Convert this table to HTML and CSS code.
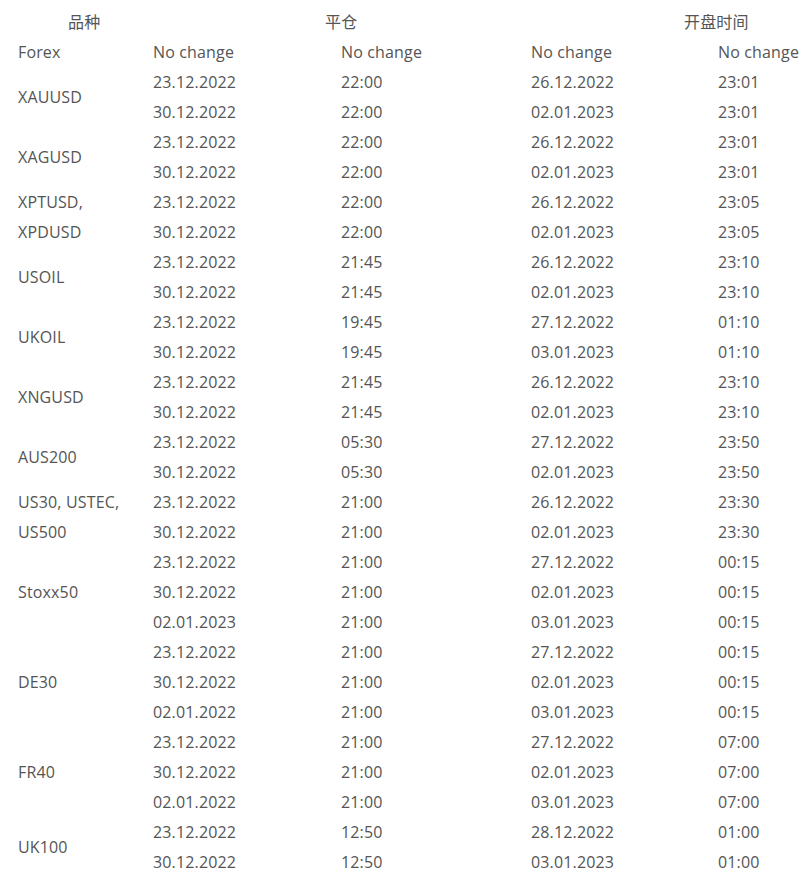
FILE: index.html
```html
<!DOCTYPE html>
<html lang="zh">
<head>
<meta charset="utf-8">
<title>Holiday schedule</title>
<link rel="stylesheet" href="styles.css">
</head>
<body>
<table class="sched">
  <colgroup>
    <col class="c1"><col class="c2"><col class="c3"><col class="c4"><col class="c5">
  </colgroup>
  <thead>
    <tr>
      <th class="h1">品种</th>
      <th class="h2" colspan="2">平仓</th>
      <th class="h3" colspan="2">开盘时间</th>
    </tr>
  </thead>
  <tbody>
    <tr><td>Forex</td><td>No change</td><td>No change</td><td>No change</td><td>No change</td></tr>

    <tr><td rowspan="2">XAUUSD</td><td>23.12.2022</td><td>22:00</td><td>26.12.2022</td><td>23:01</td></tr>
    <tr><td>30.12.2022</td><td>22:00</td><td>02.01.2023</td><td>23:01</td></tr>

    <tr><td rowspan="2">XAGUSD</td><td>23.12.2022</td><td>22:00</td><td>26.12.2022</td><td>23:01</td></tr>
    <tr><td>30.12.2022</td><td>22:00</td><td>02.01.2023</td><td>23:01</td></tr>

    <tr><td rowspan="2">XPTUSD, XPDUSD</td><td>23.12.2022</td><td>22:00</td><td>26.12.2022</td><td>23:05</td></tr>
    <tr><td>30.12.2022</td><td>22:00</td><td>02.01.2023</td><td>23:05</td></tr>

    <tr><td rowspan="2">USOIL</td><td>23.12.2022</td><td>21:45</td><td>26.12.2022</td><td>23:10</td></tr>
    <tr><td>30.12.2022</td><td>21:45</td><td>02.01.2023</td><td>23:10</td></tr>

    <tr><td rowspan="2">UKOIL</td><td>23.12.2022</td><td>19:45</td><td>27.12.2022</td><td>01:10</td></tr>
    <tr><td>30.12.2022</td><td>19:45</td><td>03.01.2023</td><td>01:10</td></tr>

    <tr><td rowspan="2">XNGUSD</td><td>23.12.2022</td><td>21:45</td><td>26.12.2022</td><td>23:10</td></tr>
    <tr><td>30.12.2022</td><td>21:45</td><td>02.01.2023</td><td>23:10</td></tr>

    <tr><td rowspan="2">AUS200</td><td>23.12.2022</td><td>05:30</td><td>27.12.2022</td><td>23:50</td></tr>
    <tr><td>30.12.2022</td><td>05:30</td><td>02.01.2023</td><td>23:50</td></tr>

    <tr><td rowspan="2">US30, USTEC, US500</td><td>23.12.2022</td><td>21:00</td><td>26.12.2022</td><td>23:30</td></tr>
    <tr><td>30.12.2022</td><td>21:00</td><td>02.01.2023</td><td>23:30</td></tr>

    <tr><td rowspan="3">Stoxx50</td><td>23.12.2022</td><td>21:00</td><td>27.12.2022</td><td>00:15</td></tr>
    <tr><td>30.12.2022</td><td>21:00</td><td>02.01.2023</td><td>00:15</td></tr>
    <tr><td>02.01.2023</td><td>21:00</td><td>03.01.2023</td><td>00:15</td></tr>

    <tr><td rowspan="3">DE30</td><td>23.12.2022</td><td>21:00</td><td>27.12.2022</td><td>00:15</td></tr>
    <tr><td>30.12.2022</td><td>21:00</td><td>02.01.2023</td><td>00:15</td></tr>
    <tr><td>02.01.2022</td><td>21:00</td><td>03.01.2023</td><td>00:15</td></tr>

    <tr><td rowspan="3">FR40</td><td>23.12.2022</td><td>21:00</td><td>27.12.2022</td><td>07:00</td></tr>
    <tr><td>30.12.2022</td><td>21:00</td><td>02.01.2023</td><td>07:00</td></tr>
    <tr><td>02.01.2022</td><td>21:00</td><td>03.01.2023</td><td>07:00</td></tr>

    <tr><td rowspan="2">UK100</td><td>23.12.2022</td><td>12:50</td><td>28.12.2022</td><td>01:00</td></tr>
    <tr><td>30.12.2022</td><td>12:50</td><td>03.01.2023</td><td>01:00</td></tr>
  </tbody>
</table>
</body>
</html>
```

FILE: styles.css
```css
html, body {
  background: #ffffff;
}
body {
  margin: 7px 8px 8px 8px;
  font-family: "Open Sans", "Noto Sans CJK SC", sans-serif;
  font-size: 16px;
  color: #555555;
}
.sched {
  table-layout: fixed;
  border-collapse: collapse;
  border-spacing: 0;
  width: 801px;
}
.c1 { width: 135px; }
.c2 { width: 188px; }
.c3 { width: 190px; }
.c4 { width: 187px; }
.c5 { width: 101px; }
.sched th,
.sched td {
  padding: 0 10px;
  height: 30px;
  line-height: 30px;
  text-align: left;
  vertical-align: middle;
  font-weight: normal;
  white-space: nowrap;
  letter-spacing: 0.15px;
}
.sched td[rowspan] {
  white-space: normal;
}
.sched .h1 { padding-left: 60px; }
.sched .h2 { padding-left: 182px; }
.sched .h3 { padding-left: 163px; }
```
